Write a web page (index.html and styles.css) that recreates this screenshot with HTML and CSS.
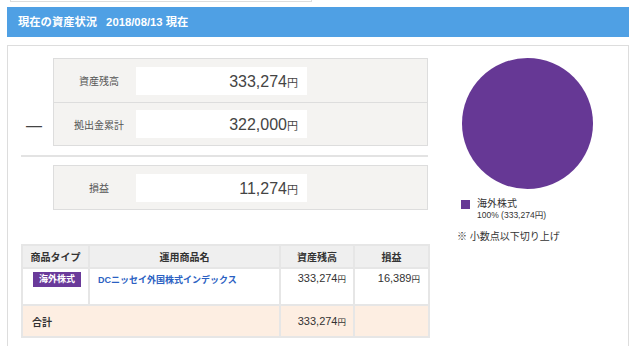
FILE: index.html
```html
<!DOCTYPE html>
<html lang="ja">
<head>
  <meta charset="UTF-8">
  <title>現在の資産状況</title>
  <meta name="viewport" content="width=device-width, initial-scale=1">
  <link rel="stylesheet" href="styles.css">
</head>
<body>
  <div class="prev"></div>

  <div class="head">現在の資産状況<span class="date">2018/08/13 現在</span></div>

  <div class="panel">
    <div class="left">
      <div class="sum">
        <div class="sign"><span>—</span></div>
        <div class="box">
          <div class="row">
            <div class="label">資産残高</div>
            <div class="value">333,274<small>円</small></div>
          </div>
          <div class="row">
            <div class="label">拠出金累計</div>
            <div class="value">322,000<small>円</small></div>
          </div>
        </div>
      </div>

      <div class="rule"></div>

      <div class="sum">
        <div class="sign"></div>
        <div class="box">
          <div class="row">
            <div class="label">損益</div>
            <div class="value">11,274<small>円</small></div>
          </div>
        </div>
      </div>

      <table class="funds">
        <colgroup>
          <col style="width: 67px">
          <col style="width: 191px">
          <col style="width: 74px">
          <col style="width: 75px">
        </colgroup>
        <tr>
          <th>商品タイプ</th>
          <th>運用商品名</th>
          <th>資産残高</th>
          <th>損益</th>
        </tr>
        <tr class="item">
          <td><span class="badge">海外株式</span></td>
          <td><a href="#">DCニッセイ外国株式インデックス</a></td>
          <td class="num">333,274<small>円</small></td>
          <td class="num">16,389<small>円</small></td>
        </tr>
        <tr class="total">
          <td colspan="2">合計</td>
          <td class="num">333,274<small>円</small></td>
          <td></td>
        </tr>
      </table>
    </div>

    <div class="right">
      <div class="pie"></div>
      <div class="legend">
        <span class="swatch"></span>
        <div>
          <div class="name">海外株式</div>
          <div class="pct">100% (333,274円)</div>
        </div>
      </div>
      <div class="note">※ 小数点以下切り上げ</div>
    </div>
  </div>
</body>
</html>
```

FILE: styles.css
```css
body {
  margin: 0 9px 0 7px;
  font-family: "Liberation Sans", "Noto Sans CJK JP", sans-serif;
  color: #333;
  background: #fff;
}

.prev {
  margin-left: 3px;
  width: 300px;
  height: 1px;
  border: 1px solid #ddd;
  border-top: 0;
}

.head {
  margin-top: 5px;
  height: 30px;
  line-height: 30px;
  padding-left: 11px;
  background: #4fa0e4;
  color: #fff;
  font-size: 11.3px;
  font-weight: bold;
}

.head .date {
  margin-left: 9px;
}

.panel {
  margin-top: 8px;
  border: 1px solid #ddd;
  padding: 12px 0 12px 13px;
  display: flex;
}

.left {
  width: 407px;
}

.sum {
  display: flex;
}

.sign {
  width: 32px;
  display: flex;
  flex-direction: column;
  justify-content: flex-end;
}

.sign span {
  height: 40px;
  line-height: 40px;
  text-align: center;
  font-size: 16px;
  color: #444;
  padding-right: 6px;
}

.box {
  flex: 1;
  border: 1px solid #ddd;
  background: #f4f3f1;
}

.row {
  display: flex;
  align-items: center;
  height: 43px;
}

.row + .row {
  border-top: 1px solid #ddd;
  height: 42px;
}

.label {
  width: 82px;
  box-sizing: border-box;
  padding-left: 8px;
  text-align: center;
  font-size: 10px;
  color: #555;
}

.value {
  width: 171px;
  height: 28px;
  line-height: 30px;
  box-sizing: border-box;
  padding-right: 9px;
  background: #fff;
  text-align: right;
  font-size: 16px;
  color: #444;
}

.value small {
  font-size: 11px;
}

.rule {
  height: 2px;
  background: #e3e3e3;
  margin: 9px 0 8px;
}

.funds {
  margin-top: 34px;
  width: 407px;
  table-layout: fixed;
  border-collapse: collapse;
  font-size: 9.5px;
  white-space: nowrap;
}

.funds th,
.funds td {
  border: 2px solid #e6e6e6;
  padding: 0 8px;
}

.funds th {
  height: 21px;
  padding: 0;
  background: #efefef;
  font-size: 10px;
  font-weight: bold;
  color: #333;
}

.funds .item td {
  height: 32px;
  vertical-align: top;
  padding-top: 3px;
}

.funds .num {
  text-align: right;
  padding-right: 7px;
  font-size: 11px;
}

.funds .item .num:last-child {
  padding-right: 8px;
}

.funds small {
  font-size: 8.5px;
}

.funds a {
  color: #2b5fc2;
  text-decoration: none;
  font-size: 9px;
  font-weight: bold;
  line-height: 16px;
}

.badge {
  display: inline-block;
  width: 48px;
  height: 15px;
  line-height: 15px;
  background: #6a3a9a;
  color: #fff;
  font-size: 9px;
  font-weight: bold;
  text-align: center;
  margin-left: 2px;
}

.total td {
  height: 30px;
  background: #fdeee2;
}

.total td:first-child {
  font-size: 10px;
  font-weight: bold;
  padding-left: 9px;
}

.right {
  flex: 1;
  padding-left: 33px;
}

.pie {
  width: 131px;
  height: 131px;
  border-radius: 50%;
  background: #663895;
  margin-left: 1px;
}

.legend {
  display: flex;
  margin-top: 9px;
  font-size: 10px;
  color: #333;
}

.swatch {
  width: 9px;
  height: 9px;
  background: #663895;
  margin: 2px 7px 0 0;
}

.name {
  line-height: 12px;
}

.pct {
  font-size: 8.5px;
  line-height: 11px;
}

.note {
  margin: 7px 0 0 -4px;
  font-size: 10px;
}
```
